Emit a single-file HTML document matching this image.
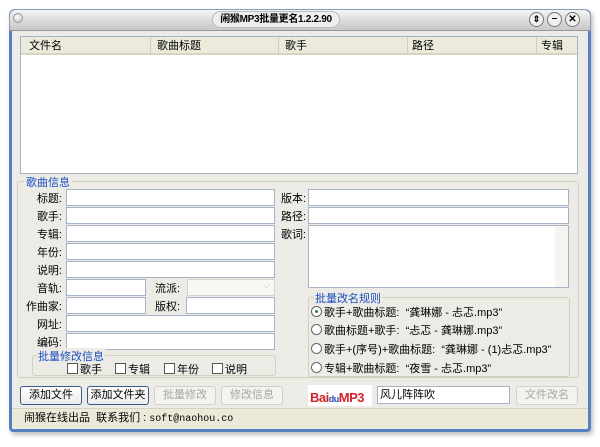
<!DOCTYPE html><html><head><meta charset="utf-8"><style>
*{margin:0;padding:0;box-sizing:border-box}
body{width:600px;height:447px;background:#fff;position:relative;font-family:"Liberation Sans","Noto Sans CJK SC",sans-serif;font-size:11px;color:#000;overflow:hidden}
.a{position:absolute;white-space:nowrap}
.win{left:9px;top:9px;width:582px;height:423px;border:3px solid #5580c4;border-top:none;border-radius:6px 6px 4px 4px;background:#ecebe6;box-shadow:2px 3px 5px rgba(0,0,0,.25)}
.tb{left:9px;top:9px;width:582px;height:22px;border-radius:7px 7px 0 0;background:linear-gradient(#f5f5f5,#d8d8d8 60%,#c8c8c8);border:1px solid #8a9ab8;border-bottom:1px solid #999}
.in{background:#fff;border:1px solid #a5b3c9;height:17px}
.lb{text-align:right;width:50px}
.btn{border:1px solid #7088a8;border-radius:3px;background:linear-gradient(#fff,#ececec);height:19px;text-align:center;line-height:17px;font-size:11px}
.dis{border-color:#d0d0c8;color:#a8a8a0;background:#f2f2ee}
.cb{display:inline-block;width:11px;height:11px;border:1px solid #555;background:#fff;vertical-align:-1px;margin-right:2px}
.rd{display:inline-block;width:11px;height:11px;border:1px solid #666;border-radius:50%;background:#fff;vertical-align:-1px;margin-right:2px;position:relative}
.blue{color:#1a4fc0}
.hd{top:37px;height:18px;line-height:18px;border-right:1px solid #cfcdc0;padding-left:8px}
</style></head><body>
<div class="a win"></div>
<div class="a tb"></div>
<div class="a" style="left:13px;top:13px;width:10px;height:10px;border-radius:50%;background:radial-gradient(circle at 40% 35%,#fff,#bbb);border:1px solid #999"></div>
<div class="a" style="left:212px;top:11px;width:128px;height:17px;border-radius:9px;background:#eee;border:1px solid #bbb;text-align:center;font-weight:bold;line-height:15px;font-size:10px;letter-spacing:-.3px">闹猴MP3批量更名1.2.2.90</div>
<div class="a" style="left:529px;top:12px;width:15px;height:15px;border-radius:50%;border:1px solid #777;background:#f0f0f0;text-align:center;font-size:9px;line-height:13px;font-weight:bold">⇕</div>
<div class="a" style="left:547px;top:12px;width:15px;height:15px;border-radius:50%;border:1px solid #777;background:#f0f0f0;text-align:center;font-size:10px;line-height:12px;font-weight:bold">–</div>
<div class="a" style="left:565px;top:12px;width:15px;height:15px;border-radius:50%;border:1px solid #777;background:#f0f0f0;text-align:center;font-size:10px;line-height:13px;font-weight:bold">✕</div>
<div class="a" style="left:20px;top:36px;width:558px;height:138px;background:#fff;border:1px solid #a5b3c9"></div>
<div class="a" style="left:21px;top:37px;width:556px;height:18px;background:#ebeadb;border-bottom:2px solid #d6d3c2"></div>
<div class="a hd" style="left:21px;width:130px">文件名</div>
<div class="a hd" style="left:151px;width:128px;padding-left:6px">歌曲标题</div>
<div class="a hd" style="left:279px;width:129px;padding-left:6px">歌手</div>
<div class="a hd" style="left:408px;width:129px;padding-left:4px">路径</div>
<div class="a hd" style="left:537px;width:40px;padding-left:4px;border:none">专辑</div>
<div class="a" style="left:17px;top:181px;width:562px;height:197px;border:1px solid #d0d0bf;border-radius:3px"></div>
<div class="a blue" style="left:24px;top:174px;background:#ecebe6;padding:0 2px">歌曲信息</div>
<div class="a lb" style="left:12px;top:190px">标题:</div><div class="a in" style="left:66px;top:189px;width:209px"></div>
<div class="a lb" style="left:12px;top:208px">歌手:</div><div class="a in" style="left:66px;top:207px;width:209px"></div>
<div class="a lb" style="left:12px;top:226px">专辑:</div><div class="a in" style="left:66px;top:225px;width:209px"></div>
<div class="a lb" style="left:12px;top:244px">年份:</div><div class="a in" style="left:66px;top:243px;width:209px"></div>
<div class="a lb" style="left:12px;top:262px">说明:</div><div class="a in" style="left:66px;top:261px;width:209px"></div>
<div class="a lb" style="left:12px;top:280px">音轨:</div><div class="a in" style="left:66px;top:279px;width:80px"></div>
<div class="a" style="left:155px;top:280px">流派:</div><div class="a in" style="left:187px;top:279px;width:88px;border-color:#d5d5cc;background:#f7f7f4;color:#bbb;text-align:right;padding-right:4px;font-size:9px">⌵</div>
<div class="a lb" style="left:12px;top:298px">作曲家:</div><div class="a in" style="left:66px;top:297px;width:80px"></div>
<div class="a" style="left:155px;top:298px">版权:</div><div class="a in" style="left:186px;top:297px;width:89px"></div>
<div class="a lb" style="left:12px;top:316px">网址:</div><div class="a in" style="left:66px;top:315px;width:209px"></div>
<div class="a lb" style="left:12px;top:334px">编码:</div><div class="a in" style="left:66px;top:333px;width:209px"></div>
<div class="a" style="left:32px;top:355px;width:244px;height:21px;border:1px solid #d0d0bf;border-radius:3px"></div>
<div class="a blue" style="left:37px;top:348px;background:#ecebe6;padding:0 1px">批量修改信息</div>
<div class="a" style="left:67px;top:361px"><span class="cb"></span>歌手</div>
<div class="a" style="left:115px;top:361px"><span class="cb"></span>专辑</div>
<div class="a" style="left:164px;top:361px"><span class="cb"></span>年份</div>
<div class="a" style="left:212px;top:361px"><span class="cb"></span>说明</div>
<div class="a" style="left:281px;top:190px">版本:</div><div class="a in" style="left:308px;top:189px;width:261px"></div>
<div class="a" style="left:281px;top:208px">路径:</div><div class="a in" style="left:308px;top:207px;width:261px"></div>
<div class="a" style="left:281px;top:226px">歌词:</div><div class="a in" style="left:308px;top:225px;width:261px;height:63px"></div>
<div class="a" style="left:555px;top:226px;width:13px;height:61px;background:#f4f4f0"></div>
<div class="a" style="left:308px;top:297px;width:262px;height:80px;border:1px solid #d0d0bf;border-radius:3px"></div>
<div class="a blue" style="left:314px;top:290px;background:#ecebe6;padding:0 1px">批量改名规则</div>
<div class="a" style="left:311px;top:304px"><span class="rd"><span class="a" style="left:3px;top:3px;width:3px;height:3px;border-radius:50%;background:#2a8a2a"></span></span>歌手+歌曲标题: &nbsp;“龚琳娜 - 忐忑.mp3”</div>
<div class="a" style="left:311px;top:322px"><span class="rd"></span>歌曲标题+歌手: &nbsp;“忐忑 - 龚琳娜.mp3”</div>
<div class="a" style="left:311px;top:341px"><span class="rd"></span>歌手+(序号)+歌曲标题: &nbsp;“龚琳娜 - (1)忐忑.mp3”</div>
<div class="a" style="left:311px;top:360px"><span class="rd"></span>专辑+歌曲标题: &nbsp;“夜雪 - 忐忑.mp3”</div>
<div class="a btn" style="left:20px;top:386px;width:62px;border-color:#3a5a8a">添加文件</div>
<div class="a btn" style="left:87px;top:386px;width:62px;border-color:#3a5a8a">添加文件夹</div>
<div class="a btn dis" style="left:154px;top:386px;width:62px">批量修改</div>
<div class="a btn dis" style="left:221px;top:386px;width:62px">修改信息</div>
<div class="a" style="left:308px;top:385px;width:64px;height:21px;background:#fff"></div>
<div class="a" style="left:310px;top:390px;font-weight:bold;font-size:13px;color:#d3232a;letter-spacing:-.5px">Bai<span style="color:#2a47b8;font-size:9px">du</span><span style="color:#d3232a">MP3</span></div>
<div class="a in" style="left:377px;top:386px;width:133px;height:18px;padding-left:2px;line-height:16px">风儿阵阵吹</div>
<div class="a btn dis" style="left:516px;top:386px;width:62px">文件改名</div>
<div class="a" style="left:12px;top:408px;width:576px;height:20px;background:#ebe9d8;border-top:1px solid #d5d2c0;padding-left:12px;line-height:18px">闹猴在线出品&nbsp;&nbsp;联系我们 : <span style="font-family:'Liberation Mono',monospace;font-size:10px">soft@naohou.co</span></div>
</body></html>
